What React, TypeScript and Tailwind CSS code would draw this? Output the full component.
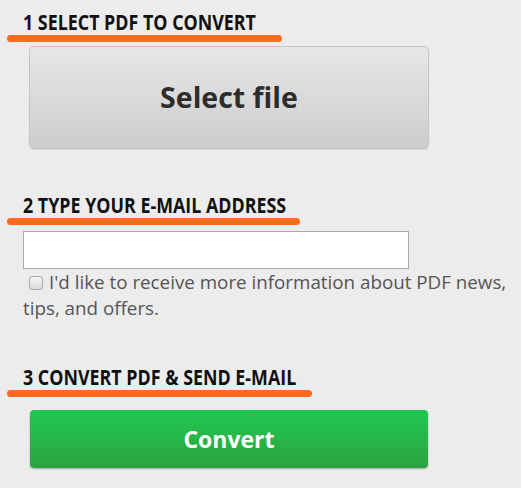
import React from "react";

const Heading = ({ text, lineWidth }: { text: string; lineWidth: string }) => (
  <div className="flex flex-col">
    <h2 className="pl-[16px] text-[21px] leading-[24px] font-bold text-[#111]">
      <span className="inline-block origin-left scale-x-[0.85]">{text}</span>
    </h2>
    <div className={`h-[7px] rounded-full bg-[#fe6a1f] mt-[1px] ${lineWidth}`} />
  </div>
);

export default function App() {
  return (
    <div className="w-[523px] h-[491px] bg-white">
      <div
        className="w-[521px] h-[488px] bg-[#ececec] flex flex-col pl-[7px] pt-[10px] text-[#555]"
        style={{ fontFamily: '"Open Sans", sans-serif' }}
      >
        <Heading text="1 SELECT PDF TO CONVERT" lineWidth="w-[275px]" />
        <button className="ml-[22px] mt-[4px] w-[400px] h-[103px] rounded-[5px] border border-[#c4c4c4] bg-gradient-to-b from-[#e7e7e7] to-[#cdcdcd] shadow-[0_1px_1px_rgba(0,0,0,0.1)] text-[28.5px] font-bold text-[#2d2d2d]">
          Select file
        </button>

        <div className="mt-[44px]">
          <Heading text="2 TYPE YOUR E-MAIL ADDRESS" lineWidth="w-[293px]" />
        </div>
        <input
          type="text"
          className="ml-[16px] mt-[6px] w-[386px] h-[38px] bg-white border border-[#a9a9a9] outline-none"
        />
        <label className="ml-[16px] w-[494px] text-[18.8px] leading-[26px] text-[#555]">
          <span className="inline-block align-[-1px] ml-[6px] mr-[6px] w-[14px] h-[14px] rounded-[3px] border border-[#aaa] bg-gradient-to-b from-[#f4f4f4] to-[#dcdcdc]" />
          I'd like to receive more information about PDF news, tips, and offers.
        </label>

        <div className="mt-[44px]">
          <Heading text="3 CONVERT PDF & SEND E-MAIL" lineWidth="w-[305px]" />
        </div>
        <button className="ml-[23px] mt-[13px] w-[398px] h-[58px] rounded-[4px] bg-gradient-to-b from-[#1fc853] to-[#2aa43d] shadow-[0_1px_2px_rgba(0,0,0,0.3)] text-[23px] font-bold text-white">
          Convert
        </button>
      </div>
    </div>
  );
}
